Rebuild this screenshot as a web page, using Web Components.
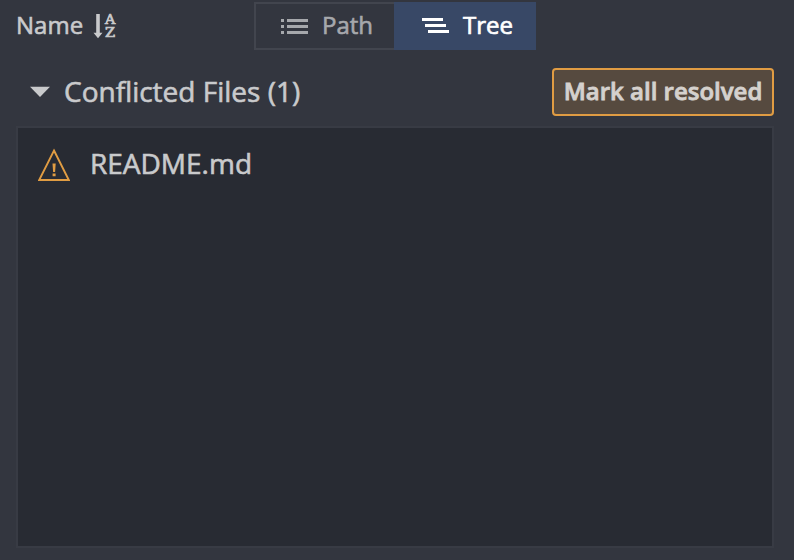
<!DOCTYPE html>
<html lang="en">
<head>
<meta charset="utf-8">
<title>Conflicted Files</title>
<style>
html,body{margin:0;height:100%;background:#33363f;overflow:hidden}
</style>
</head>
<body>
<file-panel></file-panel>
<script>
const define = (name, html) => customElements.define(name, class extends HTMLElement {
  constructor() {
    super();
    const t = document.createElement('template');
    t.innerHTML = html;
    this.attachShadow({mode: 'open'}).append(t.content.cloneNode(true));
  }
});

define('sort-control', `<style>
:host{display:flex;width:254px;height:48px;box-sizing:border-box;padding-left:16px;color:#c9cacc;font-size:24px;line-height:46px}
svg{display:block;margin:11px 0 0 10px}
.az{display:flex;flex-direction:column;margin-top:11px;margin-left:-12px;font:13px/13px "DejaVu Serif",serif;-webkit-text-stroke:.7px currentColor}
.az span{height:13px;transform-origin:left;white-space:nowrap}
.az span:first-child{transform:scaleX(1.1)}
.az span:last-child{transform:scaleX(1.12)}
</style><slot></slot>
<svg width="24" height="28" viewBox="0 0 24 28" fill="currentColor"><path d="M3.200 1h3.600v18.800h2.700L5 25.300.5 19.800h2.700z"/></svg><span class="az"><span>A</span><span>Z</span></span>`);

define('view-tab', `<style>
:host{display:flex;box-sizing:border-box;width:142px;height:48px;border:2px solid #42454e;padding-left:25px;color:#a6a8ac;font-size:24px;line-height:42px}
:host([active]){border-color:#384866;background:#384866;color:#fff;padding-left:26px;-webkit-text-stroke-width:.7px}
::slotted(svg){display:block;flex:none;margin:15px 13px 0 0;fill:currentColor}
:host([active]) ::slotted(svg){margin-top:14px}
</style><slot name="icon"></slot><slot></slot>`);

define('group-header', `<style>
:host{display:flex;align-items:flex-start;height:48px;padding:0 20px 0 30px;color:#c9cacc;font-size:28px;line-height:46px}
svg{display:block;margin:18px 14px 0 0;fill:currentColor}
.label{flex:1}
</style><svg width="20" height="12" viewBox="0 0 20 12"><path d="M0 .8h20L10 11z"/></svg><span class="label"><slot></slot></span><slot name="action"></slot>`);

define('warn-button', `<style>
:host{display:block;box-sizing:border-box;width:222px;height:48px;border:2px solid #e09c43;border-radius:4px;background:#564a3f;color:#d5d1cd;font-size:24px;font-weight:600;line-height:42px;text-align:center;white-space:nowrap;-webkit-text-stroke-width:.8px}
</style><slot></slot>`);

define('file-list', `<style>
:host{display:block;box-sizing:border-box;width:758px;height:422px;margin:10px 0 0 16px;border:2px solid #383b44;background:#282b33;padding-top:14px}
</style><slot></slot>`);

define('file-row', `<style>
:host{display:flex;height:44px;padding-left:20px;color:#c9cacc;font-size:28px;line-height:42px}
svg{display:block;margin:6px 20px 0 0}
</style><svg width="32" height="34" viewBox="0 0 32 34"><path d="M16 2.500 30.800 32H1.200z" fill="none" stroke="#e09c43" stroke-width="1.900"/><path d="M14.500 15.500h3.200l-.6 8.500h-2zM14.600 25.500h3v2.700h-3z" fill="#e09c43"/></svg><slot></slot>`);

define('file-panel', `<style>
:host{display:flex;flex-direction:column;box-sizing:border-box;width:794px;height:560px;padding-top:2px;background:#33363f;font-family:"Open Sans",sans-serif;-webkit-text-stroke:.6px currentColor}
.toolbar{display:flex;height:48px;margin-bottom:18px}
view-tab+view-tab{margin-left:-2px}
</style>
<div class="toolbar"><sort-control>Name</sort-control>
<view-tab><svg slot="icon" width="28" height="18" viewBox="0 0 28 18"><path d="M0 0h3v3H0zM6 0h21v3H6zM0 6h3v3H0zM6 6h21v3H6zM0 12h3v3H0zM6 12h21v3H6z"/></svg>Path</view-tab>
<view-tab active><svg slot="icon" width="28" height="18" viewBox="0 0 28 18"><path d="M0 0h21v3H0zM3 6h21v3H3zM6 12h21v3H6z"/></svg>Tree</view-tab></div>
<group-header>Conflicted Files (1)<warn-button slot="action">Mark all resolved</warn-button></group-header>
<file-list><file-row>README.md</file-row></file-list>`);
</script>
</body>
</html>
